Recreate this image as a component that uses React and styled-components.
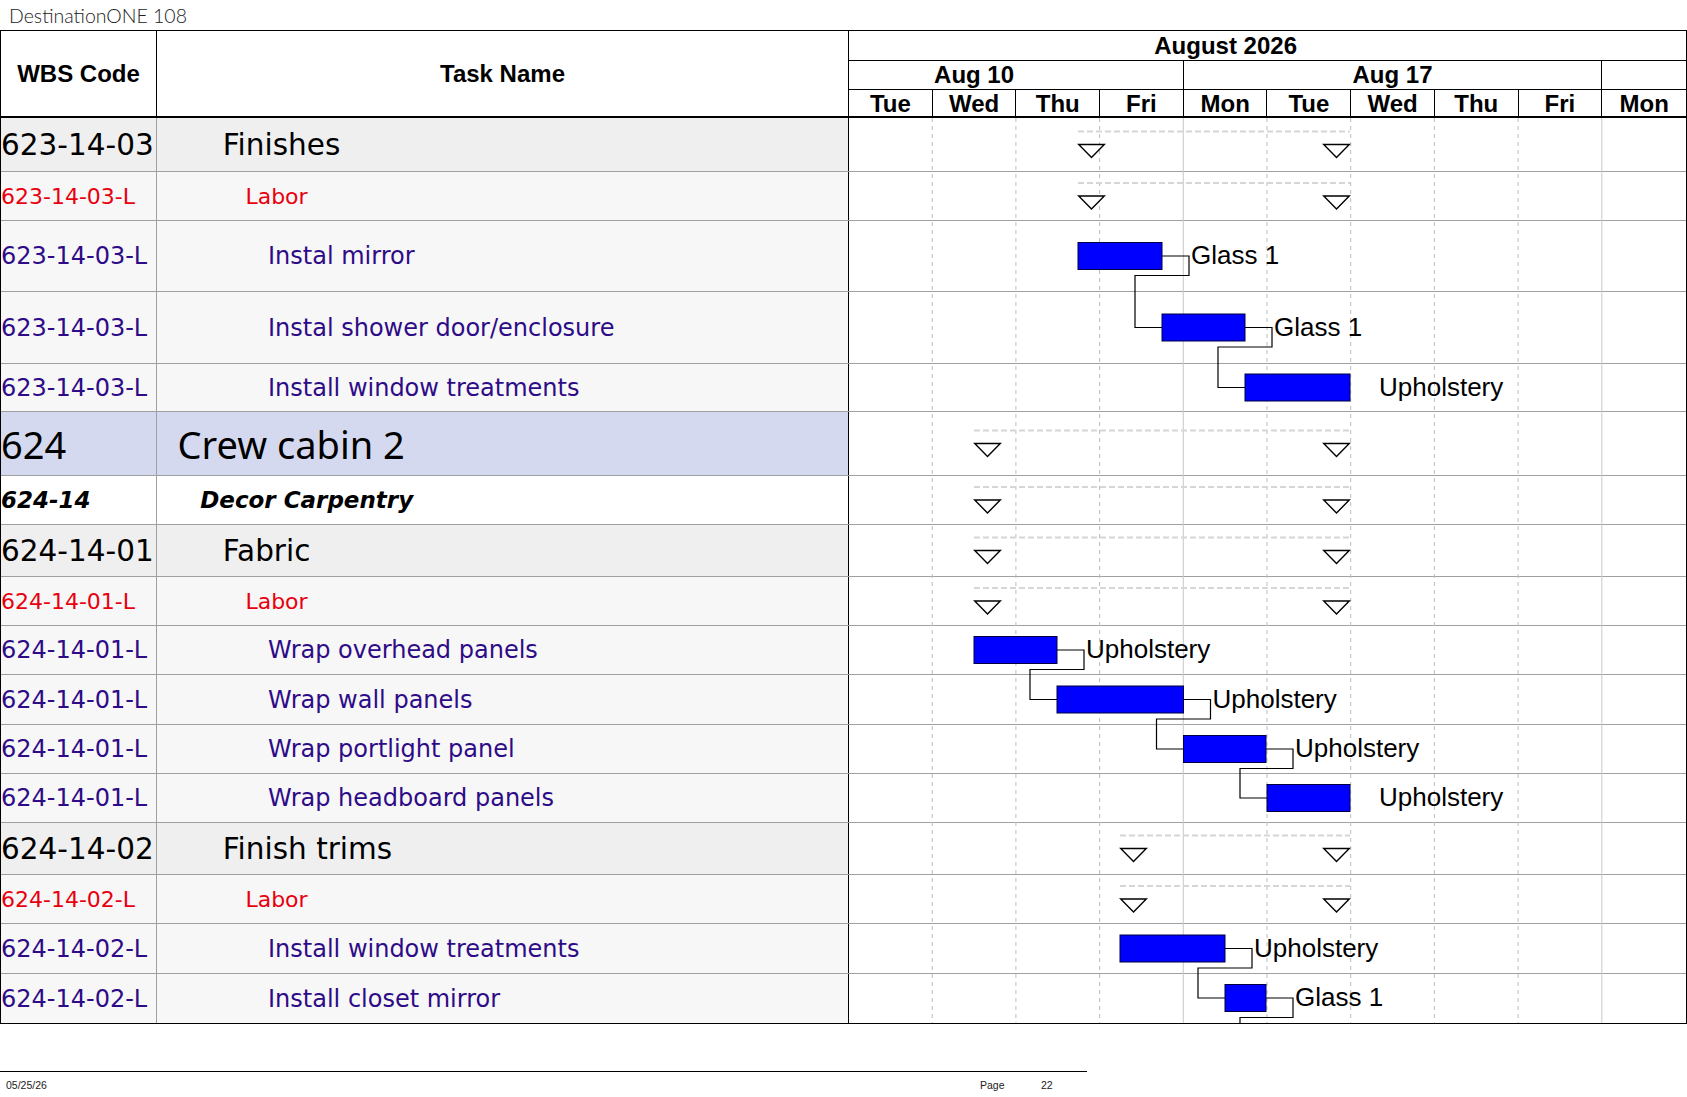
import React from 'react';
import styled, { createGlobalStyle, css } from 'styled-components';

const GlobalStyle = createGlobalStyle`
  * { box-sizing: border-box; }
  html, body { margin: 0; padding: 0; background: #fff; }
  body { font-family: "DejaVu Sans", Verdana, sans-serif; color: #000; }
`;

const DAY = 83.7;
const GANTT_W = 837;
const DAYS = ['Tue', 'Wed', 'Thu', 'Fri', 'Mon', 'Tue', 'Wed', 'Thu', 'Fri', 'Mon'];

// s / e are pixel offsets inside the gantt column
const ROWS = [
  { wbs: '623-14-03', name: 'Finishes', type: 'group', h: 54, summary: [229, 501] },
  { wbs: '623-14-03-L', name: 'Labor', type: 'labor', h: 49, summary: [229, 501] },
  { wbs: '623-14-03-L', name: 'Instal mirror', type: 'task', h: 71, bar: [229, 313], label: 'Glass 1', link: true },
  { wbs: '623-14-03-L', name: 'Instal shower door/enclosure', type: 'task', h: 72, bar: [313, 396], label: 'Glass 1', link: true },
  { wbs: '623-14-03-L', name: 'Install window treatments', type: 'task', h: 48, bar: [396, 501], label: 'Upholstery' },
  { wbs: '624', name: 'Crew cabin 2', type: 'area', h: 64, summary: [125, 501] },
  { wbs: '624-14', name: 'Decor Carpentry', type: 'carpentry', h: 49, summary: [125, 501] },
  { wbs: '624-14-01', name: 'Fabric', type: 'group', h: 52, summary: [125, 501] },
  { wbs: '624-14-01-L', name: 'Labor', type: 'labor', h: 49, summary: [125, 501] },
  { wbs: '624-14-01-L', name: 'Wrap overhead panels', type: 'task', h: 49, bar: [125, 208], label: 'Upholstery', link: true },
  { wbs: '624-14-01-L', name: 'Wrap wall panels', type: 'task', h: 50, bar: [208, 334.5], label: 'Upholstery', link: true },
  { wbs: '624-14-01-L', name: 'Wrap portlight panel', type: 'task', h: 49, bar: [334.5, 417], label: 'Upholstery', link: true },
  { wbs: '624-14-01-L', name: 'Wrap headboard panels', type: 'task', h: 49, bar: [418, 501], label: 'Upholstery' },
  { wbs: '624-14-02', name: 'Finish trims', type: 'group', h: 52, summary: [271, 501] },
  { wbs: '624-14-02-L', name: 'Labor', type: 'labor', h: 49, summary: [271, 501] },
  { wbs: '624-14-02-L', name: 'Install window treatments', type: 'task', h: 50, bar: [271, 376], label: 'Upholstery', link: true },
  { wbs: '624-14-02-L', name: 'Install closet mirror', type: 'task', h: 49, bar: [376, 417], label: 'Glass 1', link: true, nextStart: 418 },
];

const LEVEL = { area: 1, carpentry: 2, group: 3, labor: 4, task: 5 };

const TYPE_STYLE = {
  area: css`
    background: #d4d9ef;
    font-family: "Noto Sans", "Open Sans", sans-serif;
    font-size: 38px;
  `,
  carpentry: css`
    background: #fff;
    font-size: 23px;
    font-weight: bold;
    font-style: italic;
  `,
  group: css`
    background: #efefef;
    font-size: 29.5px;
  `,
  labor: css`
    background: #f7f7f7;
    color: #e8000e;
    font-size: 22px;
  `,
  task: css`
    background: #f7f7f7;
    color: #2e0b87;
    font-size: 24px;
  `,
};

const Page = styled.div`
  width: 1687px;
`;

const Title = styled.div`
  height: 30px;
  display: flex;
  align-items: center;
  padding-left: 9px;
  font-family: Lato, "Liberation Sans", sans-serif;
  font-weight: 300;
  font-size: 19.5px;
  color: #222;
`;

const Table = styled.div`
  border: 1px solid #000;
  width: 1687px;
`;

const Columns = styled.div`
  display: grid;
  grid-template-columns: 156px 692px ${GANTT_W}px;
`;

const HeadLabel = styled.div`
  height: 87px;
  display: flex;
  align-items: center;
  justify-content: center;
  border-right: 1px solid #000;
  border-bottom: 2px solid #000;
  font-family: "Liberation Sans", Arial, sans-serif;
  font-weight: bold;
  font-size: 24px;
`;

const Timescale = styled.div`
  display: grid;
  grid-template-columns: repeat(10, 1fr);
  grid-template-rows: 30px 29px 28px;
  font-family: "Liberation Sans", Arial, sans-serif;
  font-weight: bold;
  font-size: 24px;
`;

const ScaleCell = styled.div`
  grid-column: span ${p => p.$span || 1};
  display: flex;
  align-items: center;
  justify-content: center;
  padding-right: ${p => p.$shift || 0}px;
  padding-top: ${p => (p.$bottom === 2 ? 2 : 0)}px;
  border-bottom: ${p => p.$bottom || 1}px solid #000;
  border-right: ${p => (p.$edge ? '1px solid #000' : 'none')};
  line-height: 1;
`;

const Body = styled.div`
  position: relative;
`;

const Row = styled(Columns)`
  height: ${p => p.$h}px;
  border-bottom: ${p => (p.$last ? 'none' : '1px solid #a0a0a0')};
`;

const Cell = styled.div`
  display: flex;
  align-items: center;
  white-space: nowrap;
  ${p => TYPE_STYLE[p.$type]}
`;

const WbsCell = styled(Cell)`
  border-right: 1px solid #a0a0a0;
`;

const NameCell = styled(Cell)`
  border-right: 1px solid #000;
  padding-left: ${p => LEVEL[p.$type] * 22.6 - 2}px;
`;

const GanttCell = styled.div`
  background: #fff;
`;

const ChartSvg = styled.svg`
  position: absolute;
  top: 0;
  left: 848px;
  overflow: hidden;
  pointer-events: none;
`;

const Footer = styled.div`
  margin-top: 47px;
  width: 1087px;
  border-top: 1px solid #000;
  display: grid;
  grid-template-columns: 980px 61px 1fr;
  padding-top: 7px;
  font-family: "Liberation Sans", Arial, sans-serif;
  font-size: 10.5px;
  color: #222;
`;

const FooterText = styled.span`
  padding-left: ${p => p.$pad || 0}px;
`;

function GanttChart({ rows }) {
  let y = 0;
  const layout = rows.map(r => {
    const top = y;
    y += r.h;
    return { ...r, top, cy: top + (r.h - 1) / 2 };
  });
  const total = y;

  const gridLines = [];
  for (let k = 1; k < 10; k++) {
    const x = k * DAY - 0.5;
    const solid = k === 4 || k === 9;
    gridLines.push(
      <line key={k} x1={x} x2={x} y1={0} y2={total}
        stroke={solid ? '#c9c9c9' : '#bdbdbd'} strokeWidth="1"
        strokeDasharray={solid ? undefined : '4 4'} />
    );
  }

  return (
    <ChartSvg width={GANTT_W} height={total} viewBox={`0 0 ${GANTT_W} ${total}`}>
      {gridLines}
      {layout.map((r, i) => {
        if (r.summary) {
          const [s, e] = r.summary;
          const triTop = r.top + r.h / 2 - 0.5;
          const tri = x0 => `${x0 + 0.7},${triTop} ${x0 + 26.3},${triTop} ${x0 + 13.5},${triTop + 13}`;
          return (
            <g key={i}>
              <line x1={s} x2={e} y1={triTop - 13} y2={triTop - 13}
                stroke="#d6d6d6" strokeWidth="2" strokeDasharray="6 3" />
              <polygon points={tri(s)} fill="#fff" stroke="#000" strokeWidth="1.4" />
              <polygon points={tri(e - 27)} fill="#fff" stroke="#000" strokeWidth="1.4" />
            </g>
          );
        }
        const [s, e] = r.bar;
        const next = layout[i + 1];
        const nextStart = r.nextStart ?? (next && next.bar ? next.bar[0] : e);
        const nextCy = next && next.bar ? next.cy : total + 20;
        const link = r.link
          ? `M${e},${r.cy} H${e + 27} V${r.cy + 19.5} H${nextStart - 27} V${nextCy} H${nextStart}`
          : null;
        return (
          <g key={i}>
            {link && <path d={link} fill="none" stroke="#000" strokeWidth="1.2" />}
            <rect x={s} y={r.cy - 13.5} width={e - s} height="27"
              fill="#0000ff" stroke="#000040" strokeWidth="1" />
            <text x={e + 29} y={r.cy - 1} dominantBaseline="central"
              fontFamily='"Liberation Sans", Arial, sans-serif' fontSize="26" fill="#000">
              {r.label}
            </text>
          </g>
        );
      })}
    </ChartSvg>
  );
}

export default function App() {
  return (
    <Page>
      <GlobalStyle />
      <Title>DestinationONE 108</Title>
      <Table>
        <Columns>
          <HeadLabel>WBS Code</HeadLabel>
          <HeadLabel>Task Name</HeadLabel>
          <Timescale>
            <ScaleCell $span={9}>August 2026</ScaleCell>
            <ScaleCell />
            <ScaleCell $span={4} $shift={DAY} $edge>Aug 10</ScaleCell>
            <ScaleCell $span={5} $edge>Aug 17</ScaleCell>
            <ScaleCell />
            {DAYS.map((d, i) => (
              <ScaleCell key={i} $bottom={2} $edge={i < DAYS.length - 1}>{d}</ScaleCell>
            ))}
          </Timescale>
        </Columns>
        <Body>
          {ROWS.map((r, i) => (
            <Row key={i} $h={r.h} $last={i === ROWS.length - 1}>
              <WbsCell $type={r.type}>{r.wbs}</WbsCell>
              <NameCell $type={r.type}>{r.name}</NameCell>
              <GanttCell />
            </Row>
          ))}
          <GanttChart rows={ROWS} />
        </Body>
      </Table>
      <Footer>
        <FooterText $pad={6}>05/25/26</FooterText>
        <FooterText>Page</FooterText>
        <FooterText>22</FooterText>
      </Footer>
    </Page>
  );
}
